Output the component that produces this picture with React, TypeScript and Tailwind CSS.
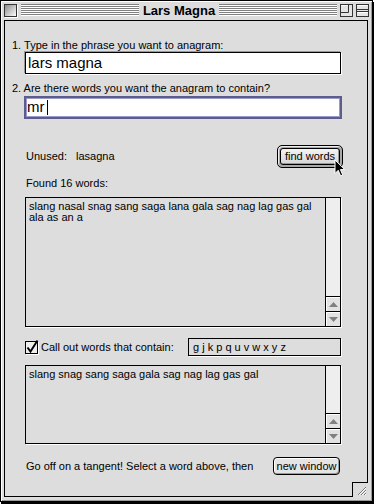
import React from "react";

function Stripes() {
  return (
    <div className="mt-[3px] h-[12px] flex-1 bg-[image:repeating-linear-gradient(#7f7f7f_0_1px,#ffffff_1px_2px)]" />
  );
}

function TitleBar() {
  return (
    <div className="flex h-[19px] items-start pl-[3px] pr-[3px]">
      {/* close box */}
      <div className="mt-[3px] h-[13px] w-[13px] border border-[#333] bg-gradient-to-br from-[#8c8c8c] to-white shadow-[1px_1px_0_#fff]" />
      <div className="w-[4px]" />
      <Stripes />
      <div className="mt-[3px] px-[4px] text-[13px] font-bold leading-[13px]">Lars Magna</div>
      <Stripes />
      <div className="w-[3px]" />
      {/* zoom box */}
      <svg className="mt-[3px]" width="13" height="13" viewBox="0 0 13 13">
        <rect x="0.5" y="0.5" width="12" height="12" fill="#e4e4e4" stroke="#333" />
        <path d="M0.5 8.5H8.5V0.5" fill="none" stroke="#333" />
        <path d="M1.5 1.5H7.5" stroke="#fff" />
      </svg>
      <div className="w-[3px]" />
      {/* collapse box */}
      <svg className="mt-[3px]" width="13" height="13" viewBox="0 0 13 13">
        <rect x="0.5" y="0.5" width="12" height="12" fill="#e4e4e4" stroke="#333" />
        <path d="M0.5 5.5H12.5M0.5 7.5H12.5" stroke="#333" />
        <path d="M1.5 1.5H11.5M1.5 8.5H11.5" stroke="#fff" />
      </svg>
    </div>
  );
}

function ScrollBar() {
  return (
    <div className="flex w-[15px] flex-col border-l border-black bg-[#eeeeee]">
      <div className="flex-1" />
      <div className="flex h-[15px] items-center justify-center border-t border-black bg-[#e2e2e2] shadow-[inset_1px_1px_0_#fff]">
        <svg width="9" height="5" viewBox="0 0 9 5">
          <path d="M4.5 0L9 5H0Z" fill="#808080" />
        </svg>
      </div>
      <div className="flex h-[15px] items-center justify-center border-t border-black bg-[#e2e2e2] shadow-[inset_1px_1px_0_#fff]">
        <svg width="9" height="5" viewBox="0 0 9 5">
          <path d="M0 0H9L4.5 5Z" fill="#808080" />
        </svg>
      </div>
    </div>
  );
}

function Cursor() {
  return (
    <svg className="absolute left-[56px] top-[13px]" width="12" height="18" viewBox="0 0 12 18">
      <path
        d="M1 1V14.5L4.2 11.3L6.6 16.8L8.7 15.9L6.4 10.6H10.8Z"
        fill="#000"
        stroke="#fff"
        strokeWidth="1"
        strokeLinejoin="miter"
      />
    </svg>
  );
}

export default function App() {
  return (
    <div className="h-[504px] w-[374px] bg-white font-['Liberation_Sans',Arial,sans-serif] text-black">
      <div className="flex h-[502px] w-[373px] flex-col border border-black bg-[#dddddd] shadow-[1px_2px_0_#000,inset_1px_1px_0_#fff,inset_-1px_-1px_0_#999]">
        <TitleBar />
        <div className="flex flex-1 flex-col pb-[4px] pl-[3px] pr-[4px]">
          <div className="relative flex flex-1 flex-col border border-black bg-[#dddddd] text-[11px]">
            <div className="ml-[7px] mt-[17px] flex h-[14px] items-center">
              1. Type in the phrase you want to anagram:
            </div>
            <div className="ml-[20px] flex h-[22px] w-[316px] items-center border border-black bg-white pl-[2px] text-[15px] shadow-[1px_1px_0_#fff,-1px_-1px_0_#999]">
              lars magna
            </div>

            <div className="ml-[7px] mt-[7px] flex h-[14px] items-center">
              2. Are there words you want the anagram to contain?
            </div>
            <div className="ml-[19px] mt-[1px] h-[23px] w-[318px] border-2 border-[#5c5c8e]">
              <div className="flex h-full items-center bg-white pl-[1px] text-[15px] shadow-[inset_0_0_0_1px_#9a9ac4]">
                mr
                <span className="ml-[2px] inline-block h-[15px] w-px bg-black" />
              </div>
            </div>

            <div className="ml-[21px] mt-[26px] flex h-[23px] w-[317px] items-center justify-between">
              <div className="flex items-center">
                <span>Unused:</span>
                <span className="ml-[9px]">lasagna</span>
              </div>
              <div className="relative h-[23px] w-[66px] rounded-[5px] border border-black bg-[#a9a9a9] p-[2px] shadow-[inset_1px_1px_0_#eee]">
                <div className="flex h-full items-center justify-center rounded-[3px] border border-black bg-gradient-to-b from-[#f4f4f4] to-[#d6d6d6] shadow-[inset_-1px_-1px_0_#999]">
                  find words
                </div>
                <Cursor />
              </div>
            </div>

            <div className="ml-[21px] mt-[8px] flex h-[14px] items-center">Found 16 words:</div>

            <div className="ml-[20px] mt-[7px] flex h-[130px] w-[316px] border border-black bg-[#dddddd] shadow-[1px_1px_0_#fff]">
              <div className="flex-1 pl-[3px] pt-[3px] leading-[11px]">
                slang nasal snag sang saga lana gala sag nag lag gas gal
                <br />
                ala as an a
              </div>
              <ScrollBar />
            </div>

            <div className="ml-[20px] mt-[11px] flex h-[18px] w-[316px] items-center">
              <div className="relative h-[13px] w-[13px] border border-black bg-[#eeeeee] shadow-[1px_1px_0_#fff]">
                <svg className="absolute -left-px -top-[3px]" width="15" height="16" viewBox="0 0 15 16">
                  <path d="M2.5 8.5L5.5 12.5L12.5 1.5" fill="none" stroke="#000" strokeWidth="2" />
                </svg>
              </div>
              <span className="ml-[3px]">Call out words that contain:</span>
              <div className="ml-auto flex h-[18px] w-[153px] items-center border border-black bg-[#dddddd] pl-[4px] shadow-[1px_1px_0_#fff]">
                g j k p q u v w x y z
              </div>
            </div>

            <div className="ml-[20px] mt-[9px] flex h-[79px] w-[316px] border border-black bg-[#dddddd] shadow-[1px_1px_0_#fff]">
              <div className="flex-1 pl-[3px] pt-[3px] leading-[11px]">
                slang snag sang saga gala sag nag lag gas gal
              </div>
              <ScrollBar />
            </div>

            <div className="ml-[21px] mt-[13px] flex h-[18px] w-[314px] items-center justify-between">
              <span>Go off on a tangent! Select a word above, then</span>
              <div className="flex h-[18px] w-[67px] items-center justify-center rounded-[4px] border border-black bg-[#e4e4e4] shadow-[inset_1px_1px_0_#fff,inset_-1px_-1px_0_#999]">
                new window
              </div>
            </div>

            {/* grow box */}
            <div className="absolute -bottom-px -right-px h-[15px] w-[16px] border-l border-t border-black bg-[#dddddd]">
              <svg className="absolute bottom-[1px] right-[1px]" width="11" height="11" viewBox="0 0 11 11">
                <path d="M2 10L10 2M5 10L10 5M8 10L10 8" stroke="#777" />
                <path d="M3 10L10 3M6 10L10 6M9 10L10 9" stroke="#fff" />
              </svg>
            </div>
          </div>
        </div>
      </div>
    </div>
  );
}
